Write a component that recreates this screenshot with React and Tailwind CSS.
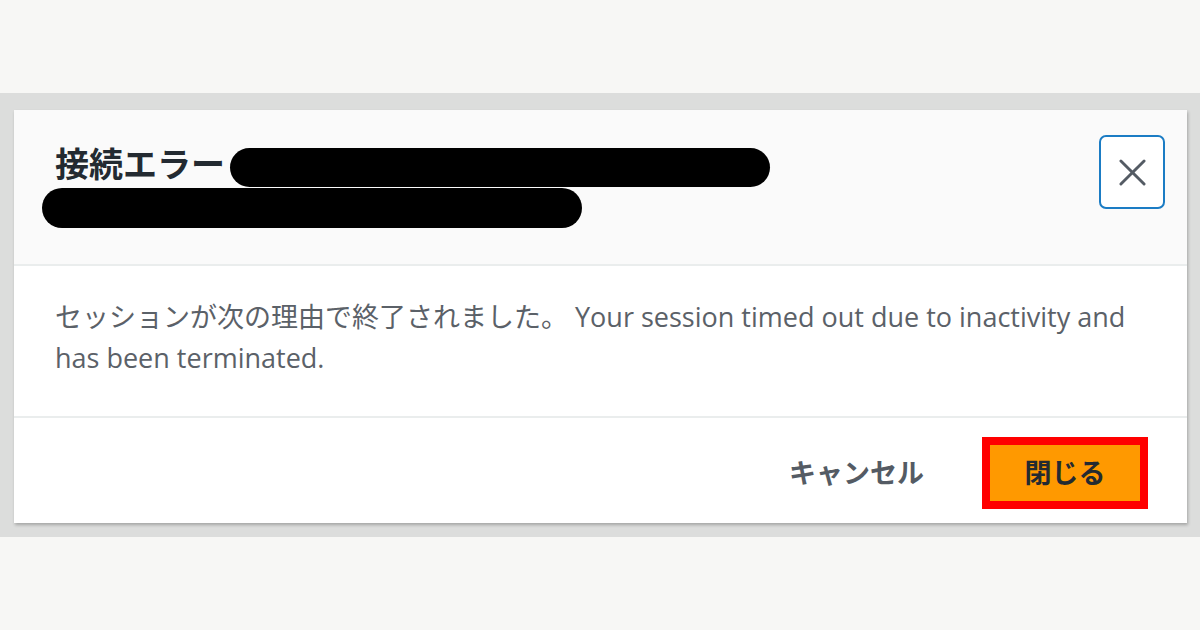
import React from 'react';

export default function App() {
    const jp = { fontFamily: '"Open Sans", "Noto Sans CJK JP", sans-serif' };

    return (
        <div className="w-[1200px] h-[630px] bg-[#f7f7f5] pt-[93px]" style={jp}>
            <div className="h-[444px] bg-[#dcdddc] pt-[17px] pl-[14px] pr-[13px]">
                <div className="h-[413px] bg-white flex flex-col shadow-[1px_2px_3px_rgba(0,0,0,0.25)]">
                    {/* header */}
                    <div className="relative h-[156px] bg-[#fafafa] border-b-2 border-[#eaeded] pl-[41px] pt-[33px]">
                        <h1 className="text-[34px] leading-[42px] font-bold text-[#232a31]">接続エラー</h1>
                        {/* redacted part of the title */}
                        <div className="absolute left-[216px] top-[38px] w-[540px] h-[39px] rounded-full bg-black"></div>
                        <div className="absolute left-[28px] top-[78px] w-[540px] h-[40px] rounded-full bg-black"></div>
                        <button className="absolute right-[22px] top-[25px] w-[66px] h-[74px] rounded-[7px] border-2 border-[#1b7cc4] bg-white flex items-center justify-center">
                            <svg width="27" height="27" viewBox="0 0 28 28" fill="none" stroke="#545b64" strokeWidth="3" strokeLinecap="round">
                                <path d="M2 2 L26 26" />
                                <path d="M26 2 L2 26" />
                            </svg>
                        </button>
                    </div>

                    {/* body */}
                    <div className="h-[152px] border-b-2 border-[#eaeded] pl-[41px] pr-[50px] pt-[30px]">
                        <p className="text-[27px] leading-[41px] text-[#5b6168]">
                            セッションが次の理由で終了されました。 Your session timed out due to inactivity and has been terminated.
                        </p>
                    </div>

                    {/* footer */}
                    <div className="flex-1 flex items-start justify-end pr-[39px] pt-[19px]">
                        <button className="h-[72px] mr-[58px] text-[27px] font-bold text-[#545b64] flex items-center">
                            キャンセル
                        </button>
                        <button className="w-[166px] h-[72px] bg-[#ff9900] border-[8px] border-[#ff0000] text-[27px] font-bold text-[#232a31] flex items-center justify-center">
                            閉じる
                        </button>
                    </div>
                </div>
            </div>
        </div>
    );
}
